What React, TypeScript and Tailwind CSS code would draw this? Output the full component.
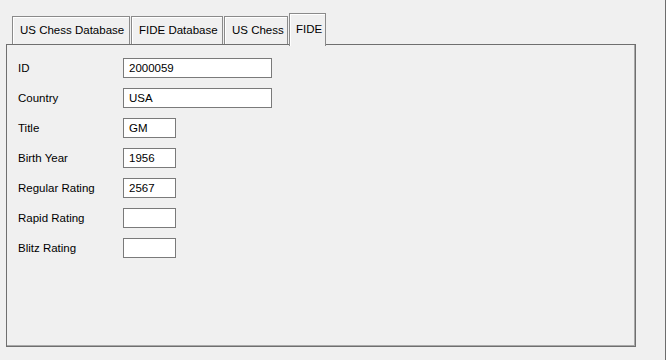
import React from 'react';

const tabs = [
  { label: 'US Chess Database', w: 'w-[118px]' },
  { label: 'FIDE Database', w: 'w-[92px]' },
  { label: 'US Chess', w: 'w-[64px]' },
];

const rows = [
  { label: 'ID', value: '2000059', wide: true },
  { label: 'Country', value: 'USA', wide: true },
  { label: 'Title', value: 'GM', wide: false },
  { label: 'Birth Year', value: '1956', wide: false },
  { label: 'Regular Rating', value: '2567', wide: false },
  { label: 'Rapid Rating', value: '', wide: false },
  { label: 'Blitz Rating', value: '', wide: false },
];

const App: React.FC = () => {
  return (
    <div
      className="w-[666px] h-[360px] bg-[#f0f0f0] border-r border-[#6d6d6d] pl-[6px] pt-[13px] text-[11.5px] text-black"
      style={{ fontFamily: '"Liberation Sans", Arial, sans-serif' }}
    >
      {/* tab strip */}
      <div className="flex items-end h-[31px] pl-[6px] gap-[1px]">
        {tabs.map((t) => (
          <div
            key={t.label}
            className={`${t.w} h-[28px] flex items-center pl-[7px] border-l border-t border-r border-[#8a8a8a] shadow-[inset_1px_1px_0_#ffffff] bg-[#f0f0f0]`}
          >
            {t.label}
          </div>
        ))}
        <div className="relative z-10 w-[37px] h-[33px] -mb-[2px] flex items-start pt-[7px] pl-[6px] border-l border-t border-r border-[#8a8a8a] shadow-[inset_1px_1px_0_#ffffff] bg-[#f0f0f0]">
          FIDE
        </div>
      </div>

      {/* panel */}
      <div className="w-[630px] h-[303px] border border-[#6f6f6f] shadow-[inset_-1px_-1px_0_#a9a9a9] pl-[11px] pt-[13px]">
        <div className="flex flex-col gap-[10px]">
          {rows.map((r) => (
            <div key={r.label} className="flex items-center h-[20px]">
              <span className="w-[105px] pt-[2px]">{r.label}</span>
              <div
                className={`${r.wide ? 'w-[149px]' : 'w-[53px]'} h-[20px] bg-white border border-[#7a7a7a] flex items-center pl-[5px] pt-[1px]`}
              >
                {r.value}
              </div>
            </div>
          ))}
        </div>
      </div>
    </div>
  );
};

export default App;
